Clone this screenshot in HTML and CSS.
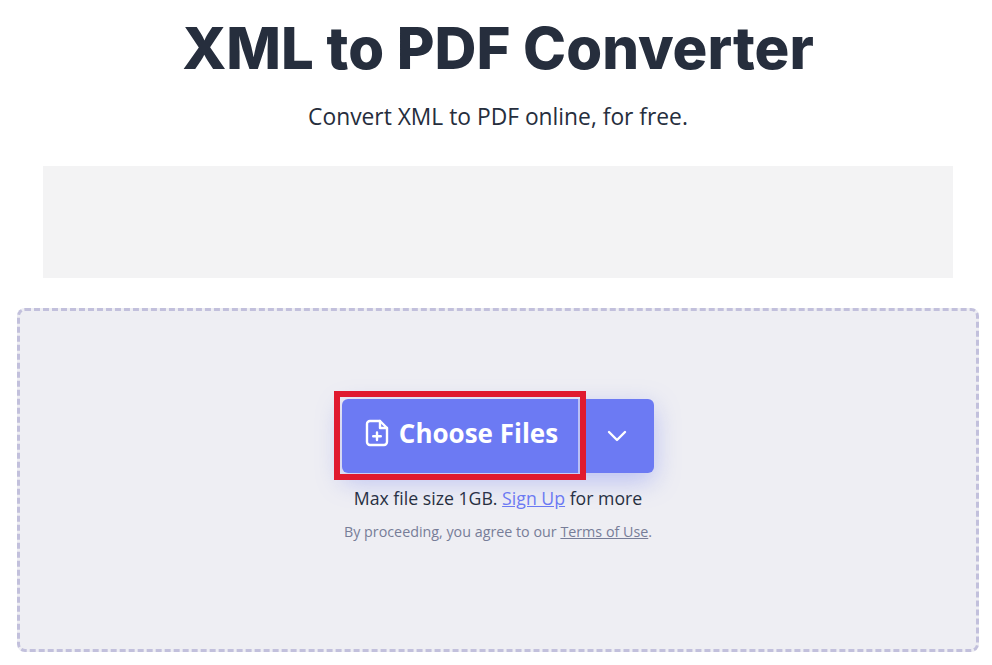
FILE: index.html
```html
<!DOCTYPE html>
<html lang="en">
<head>
  <meta charset="UTF-8" />
  <title>XML to PDF Converter</title>
  <meta name="viewport" content="width=device-width, initial-scale=1" />
  <link rel="stylesheet" href="styles.css">
</head>
<body>
  <div class="container">
    <h1>XML to PDF Converter</h1>
    <p class="subtitle">Convert XML to PDF online, for free.</p>
    <div class="ad"></div>
    <div class="dropzone">
      <div class="buttons">
        <button class="choose-btn">
          <svg class="file-icon" viewBox="0 0 24 28" width="24" height="28" fill="none" stroke="#fff" stroke-width="2.4" stroke-linecap="round" stroke-linejoin="round">
            <path d="M15 2H5a3 3 0 0 0-3 3v18a3 3 0 0 0 3 3h14a3 3 0 0 0 3-3V9z" />
            <path d="M15 2v7h7" />
            <path d="M12 13.5v7.5M8.2 17.2h7.6" />
          </svg>
          Choose Files
        </button>
        <button class="more-btn">
          <svg viewBox="0 0 20 12" width="20" height="12" fill="none" stroke="#fff" stroke-width="2.4" stroke-linecap="round" stroke-linejoin="round">
            <path d="M2 2l8 8 8-8" />
          </svg>
        </button>
        <div class="highlight"></div>
      </div>
      <p class="limit">Max file size 1GB. <a href="#">Sign Up</a> for more</p>
      <p class="terms">By proceeding, you agree to our <a href="#">Terms of Use</a>.</p>
    </div>
  </div>
</body>
</html>
```

FILE: styles.css
```css
body {
  margin: 0;
  font-family: "Open Sans", "Noto Sans", Arial, sans-serif;
  background-color: white;
  color: #262e3d;
  overflow: hidden;
}

.container {
  display: flex;
  flex-direction: column;
  height: 665px;
  padding: 0 13px 0 17px;
  box-sizing: border-box;
}

h1 {
  margin: 14px 0 0 0;
  height: 68px;
  line-height: 68px;
  font-family: Inter, Arial, sans-serif;
  font-size: 58px;
  font-weight: 800;
  text-align: center;
}

.subtitle {
  margin: 18px 0 0 0;
  height: 34px;
  line-height: 34px;
  font-size: 22.8px;
  text-align: center;
}

.ad {
  margin: 32px 26px 0 26px;
  height: 112px;
  background-color: #f3f3f4;
}

.dropzone {
  display: flex;
  flex-direction: column;
  align-items: center;
  margin-top: 30px;
  height: 344px;
  padding-top: 88px;
  box-sizing: border-box;
  background-color: #eeeef3;
  border: 3px dashed #c2c0dc;
  border-radius: 8px;
}

.buttons {
  position: relative;
  display: flex;
  height: 74px;
  border-radius: 6px;
  box-shadow: 0 8px 26px rgba(108, 122, 243, 0.4);
}

.buttons button {
  display: flex;
  align-items: center;
  justify-content: center;
  border: none;
  background-color: #6c7af3;
  color: white;
  cursor: pointer;
  font-family: inherit;
}

.choose-btn {
  width: 238px;
  gap: 10px;
  padding: 0 0 6px 3px;
  font-size: 26px;
  font-weight: 700;
  border-radius: 6px 0 0 6px;
  border-right: 2px solid #b9c0f7 !important;
}

.more-btn {
  width: 74px;
  border-radius: 0 6px 6px 0;
}

.highlight {
  position: absolute;
  left: -8px;
  top: -8px;
  width: 252px;
  height: 89px;
  box-sizing: border-box;
  border: 6px solid #e01a2f;
}

.limit {
  margin: 13px 0 0 0;
  font-size: 17.7px;
  line-height: 24px;
}

.limit a {
  color: #6c7af3;
}

.terms {
  margin: 12px 0 0 0;
  font-size: 14.3px;
  line-height: 20px;
  color: #777d98;
}

.terms a {
  color: #777d98;
}
```
